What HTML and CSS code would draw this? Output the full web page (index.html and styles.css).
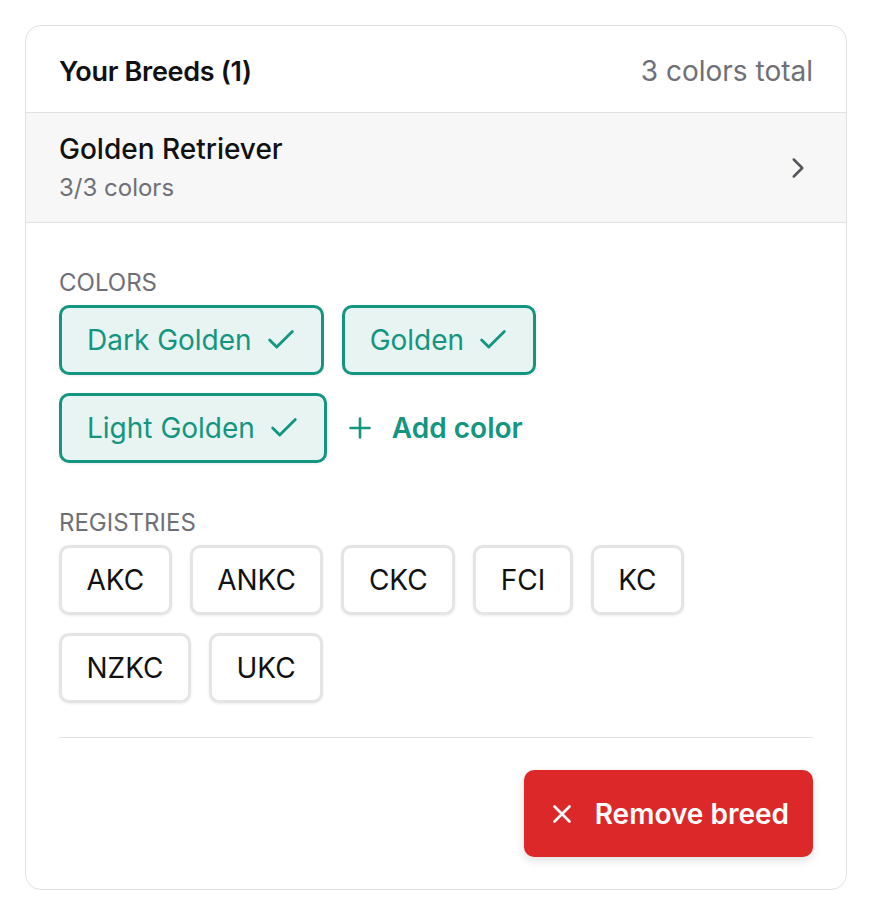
FILE: index.html
```html
<!DOCTYPE html>
<html lang="en">
<head>
    <meta charset="UTF-8">
    <meta name="viewport" content="width=device-width, initial-scale=1.0">
    <title>Your Breeds</title>
    <link rel="stylesheet" href="styles.css">
</head>
<body>
    <div class="breeds-card">
        <!-- Header -->
        <div class="card-header">
            <span class="card-title">Your Breeds (1)</span>
            <span class="card-meta">3 colors total</span>
        </div>

        <!-- Breed row -->
        <div class="breed-row">
            <div class="breed-info">
                <div class="breed-name">Golden Retriever</div>
                <div class="breed-count">3/3 colors</div>
            </div>
            <svg class="chevron" viewBox="0 0 24 24" fill="none" stroke="currentColor" stroke-width="1.8" stroke-linecap="round" stroke-linejoin="round">
                <path d="m9 18 6-6-6-6"/>
            </svg>
        </div>

        <!-- Details -->
        <div class="breed-details">
            <div class="section-label">Colors</div>
            <div class="chip-list">
                <button class="color-chip">
                    Dark Golden
                    <svg viewBox="0 0 24 24" fill="none" stroke="currentColor" stroke-width="2" stroke-linecap="round" stroke-linejoin="round"><path d="M20 6 9 17l-5-5"/></svg>
                </button>
                <button class="color-chip">
                    Golden
                    <svg viewBox="0 0 24 24" fill="none" stroke="currentColor" stroke-width="2" stroke-linecap="round" stroke-linejoin="round"><path d="M20 6 9 17l-5-5"/></svg>
                </button>
                <button class="color-chip">
                    Light Golden
                    <svg viewBox="0 0 24 24" fill="none" stroke="currentColor" stroke-width="2" stroke-linecap="round" stroke-linejoin="round"><path d="M20 6 9 17l-5-5"/></svg>
                </button>
                <button class="add-color">
                    <svg viewBox="0 0 22 22" fill="none" stroke="currentColor" stroke-width="2.6" stroke-linecap="round"><path d="M11 1.5v19M1.5 11h19"/></svg>
                    Add color
                </button>
            </div>

            <div class="section-label registries-label">Registries</div>
            <div class="chip-list">
                <button class="registry-chip">AKC</button>
                <button class="registry-chip">ANKC</button>
                <button class="registry-chip">CKC</button>
                <button class="registry-chip">FCI</button>
                <button class="registry-chip">KC</button>
                <button class="registry-chip">NZKC</button>
                <button class="registry-chip">UKC</button>
            </div>

            <div class="details-footer">
                <button class="remove-btn">
                    <svg viewBox="0 0 18 18" fill="none" stroke="currentColor" stroke-width="2.6" stroke-linecap="round"><path d="M1.5 1.5l15 15M16.5 1.5l-15 15"/></svg>
                    Remove breed
                </button>
            </div>
        </div>
    </div>
</body>
</html>
```

FILE: styles.css
```css
* {
    margin: 0;
    padding: 0;
    box-sizing: border-box;
}

body {
    font-family: Inter, "Noto Sans", sans-serif;
    background: #ffffff;
    color: #111;
    padding: 25px;
}

button {
    font: inherit;
    cursor: pointer;
}

.breeds-card {
    border: 1.5px solid #e0e0e2;
    border-radius: 16px;
    overflow: hidden;
    background: white;
}

/* Header */
.card-header {
    height: 87px;
    padding: 4px 33px 0;
    display: flex;
    align-items: center;
    justify-content: space-between;
    border-bottom: 1.5px solid #e2e2e4;
}

.card-title {
    font-size: 27px;
    font-weight: 600;
    letter-spacing: -0.3px;
    color: #111;
}

.card-meta {
    font-size: 28px;
    color: #6f6f77;
}

/* Breed row */
.breed-row {
    height: 110px;
    padding: 0 33px;
    background: #f7f7f7;
    display: flex;
    align-items: center;
    justify-content: space-between;
    border-bottom: 1.5px solid #e2e2e4;
}

.breed-name {
    font-size: 28px;
    font-weight: 500;
    line-height: 34px;
}

.breed-count {
    font-size: 24px;
    color: #6f6f77;
    line-height: 30px;
    margin-top: 7px;
}

.chevron {
    width: 34px;
    height: 34px;
    color: #55555c;
    margin-right: -2px;
}

/* Details */
.breed-details {
    padding: 46px 33px 32px;
}

.section-label {
    font-size: 24px;
    line-height: 28px;
    text-transform: uppercase;
    color: #6f6f77;
    margin-bottom: 8px;
}

.registries-label {
    margin-top: 46px;
}

.chip-list {
    display: flex;
    flex-wrap: wrap;
    gap: 18px;
}

.color-chip {
    height: 70px;
    padding: 0 23px 0 25px;
    display: flex;
    align-items: center;
    gap: 12px;
    background: #e8f4f1;
    border: 3px solid #14957f;
    border-radius: 10px;
    color: #14957f;
    font-size: 28px;
    box-shadow: 0 1px 3px rgba(0,0,0,0.08);
}

.color-chip svg {
    width: 34px;
    height: 34px;
}

.add-color {
    height: 70px;
    padding: 0 4px;
    display: flex;
    align-items: center;
    gap: 21px;
    background: none;
    border: none;
    color: #14957f;
    font-size: 28px;
    font-weight: 600;
}

.add-color svg {
    width: 22px;
    height: 22px;
}

.registry-chip {
    height: 70px;
    padding: 0 24.5px;
    background: white;
    border: 3px solid #e4e4e6;
    border-radius: 10px;
    font-size: 28px;
    color: #111;
    box-shadow: 0 1px 3px rgba(0,0,0,0.08);
}

.details-footer {
    margin-top: 34px;
    padding-top: 32px;
    border-top: 1.5px solid #e2e2e4;
    display: flex;
    justify-content: flex-end;
}

.remove-btn {
    height: 87px;
    padding: 0 24px 0 29px;
    display: flex;
    align-items: center;
    gap: 24px;
    background: #dc2828;
    color: white;
    border: none;
    border-radius: 10px;
    font-size: 28px;
    font-weight: 600;
    box-shadow: 0 4px 10px rgba(0,0,0,0.12);
}

.remove-btn svg {
    width: 18px;
    height: 18px;
}
```
